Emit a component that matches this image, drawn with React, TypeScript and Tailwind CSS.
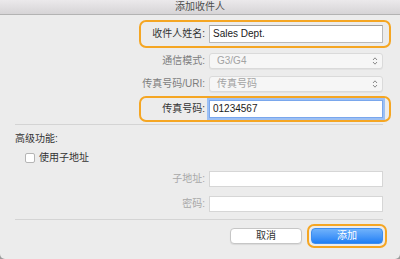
import React from 'react';

const FONT = '"Liberation Sans", "Noto Sans CJK SC", sans-serif';

function UpDown() {
  return (
    <svg width="6" height="10" viewBox="0 0 6 10" className="shrink-0">
      <path d="M1 4 L3 1.8 L5 4" fill="none" stroke="#8a8a8a" strokeWidth="1" />
      <path d="M1 6 L3 8.2 L5 6" fill="none" stroke="#8a8a8a" strokeWidth="1" />
    </svg>
  );
}

interface RowProps {
  label: string;
  labelClass: string;
  highlight?: boolean;
  className?: string;
  children: React.ReactNode;
}

function Row({ label, labelClass, highlight, className, children }: RowProps) {
  return (
    <div
      className={
        'w-[252px] flex items-center rounded-[7px] border-2 ' +
        (highlight ? 'border-[#f5a623] ' : 'border-transparent ') +
        (className ?? '')
      }
    >
      <div className={'w-[64px] text-right whitespace-nowrap text-[10px] leading-none ' + labelClass}>
        {label}
      </div>
      <div className="ml-[4px] w-[174px]">{children}</div>
    </div>
  );
}

function Select({ value }: { value: string }) {
  return (
    <div className="h-[16px] flex items-center justify-between pl-[7px] pr-[4px] rounded-[3px] border border-[#dadada] bg-[#f6f6f6] shadow-[0_1px_0_rgba(0,0,0,0.04)]">
      <span className="text-[10px] leading-none text-[#a3a3a3]">{value}</span>
      <UpDown />
    </div>
  );
}

export default function App() {
  return (
    <div className="w-[400px] h-[259px] bg-[#9c9c9c]" style={{ fontFamily: FONT }}>
      <div className="w-[400px] h-[259px] bg-[#ececec] rounded-b-[5px] flex flex-col overflow-hidden">
        {/* Title bar */}
        <div className="h-[15px] shrink-0 flex items-center justify-center bg-gradient-to-b from-[#ebe9eb] to-[#d6d4d6] border-b border-[#b3b3b3]">
          <span className="text-[10px] leading-none text-[#4d4d4d]">添加收件人</span>
        </div>

        {/* Main fields */}
        <div className="flex flex-col items-end pr-[9px]">
          <Row label="收件人姓名:" labelClass="text-[#333]" highlight className="mt-[5px] py-[3px]">
            <div className="h-[18px] flex items-center px-[3px] bg-white border border-[#b9b9b9] border-t-[#a0a0a0]">
              <span className="text-[10px] leading-none text-[#1a1a1a]">Sales Dept.</span>
            </div>
          </Row>
          <Row label="通信模式:" labelClass="text-[#7d7d7d]" className="mt-[3px]">
            <Select value="G3/G4" />
          </Row>
          <Row label="传真号码/URI:" labelClass="text-[#7d7d7d]" className="mt-[3px]">
            <Select value="传真号码" />
          </Row>
          <Row label="传真号码:" labelClass="text-[#333]" highlight className="mt-[2px] py-[2px]">
            <div className="h-[18px] flex items-center px-[3px] bg-white border border-[#7aa7ec] ring-2 ring-[#9cc0f5]">
              <span className="text-[10px] leading-none text-[#1a1a1a]">01234567</span>
            </div>
          </Row>
        </div>

        <div className="ml-[15px] w-[368px] h-px bg-[#d4d4d4] mt-[2px]" />

        {/* Advanced */}
        <div className="ml-[15px] mt-[8px] text-[10px] leading-[12px] text-[#333]">高级功能:</div>
        <label className="ml-[25px] mt-[7px] flex items-center gap-[4px]">
          <span className="w-[10px] h-[10px] rounded-[2px] bg-white border border-[#b5b5b5]" />
          <span className="text-[10px] leading-[12px] text-[#333]">使用子地址</span>
        </label>

        <div className="flex flex-col items-end pr-[9px]">
          <Row label="子地址:" labelClass="text-[#a8a8a8]" className="mt-[5px]">
            <div className="h-[16px] bg-white border border-[#d6d6d6]" />
          </Row>
          <Row label="密码:" labelClass="text-[#a8a8a8]" className="mt-[5px]">
            <div className="h-[16px] bg-white border border-[#d6d6d6]" />
          </Row>
        </div>

        <div className="ml-[15px] w-[368px] h-px bg-[#d4d4d4] mt-[5px]" />

        {/* Buttons */}
        <div className="mt-[4px] flex items-center justify-end pr-[13px] gap-[5px]">
          <button className="w-[72px] h-[16px] flex items-center justify-center rounded-[4px] bg-white border border-[#c6c6c6] shadow-[0_1px_1px_rgba(0,0,0,0.08)]">
            <span className="text-[10px] leading-none text-[#333]">取消</span>
          </button>
          <div className="rounded-[7px] border-2 border-[#f5a623] p-[2px]">
            <button className="w-[72px] h-[16px] flex items-center justify-center rounded-[4px] bg-gradient-to-b from-[#6fb2fb] to-[#1d7ff5] border border-[#3d8ef0]">
              <span className="text-[10px] leading-none text-white">添加</span>
            </button>
          </div>
        </div>
      </div>
    </div>
  );
}
